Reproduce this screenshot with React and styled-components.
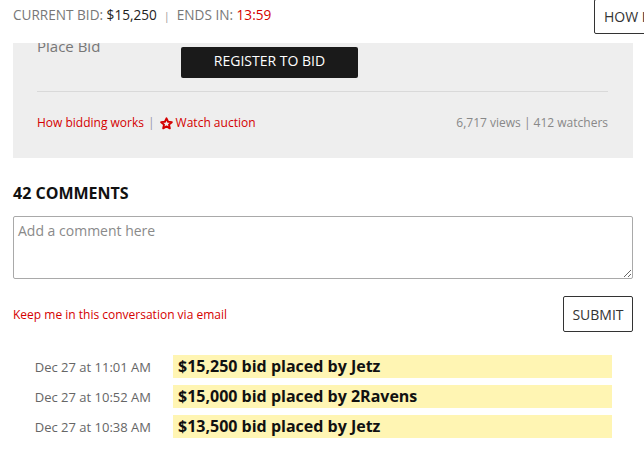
import styled, { createGlobalStyle } from 'styled-components';

const GlobalStyle = createGlobalStyle`
  html, body {
    margin: 0;
    padding: 0;
    background: #fff;
    overflow: hidden;
  }
  body {
    font-family: "Open Sans", "Noto Sans", sans-serif;
    color: #333;
  }
  * {
    box-sizing: border-box;
  }
`;

const RED = '#d40000';

const bids = [
  { time: 'Dec 27 at 11:01 AM', text: '$15,250 bid placed by Jetz' },
  { time: 'Dec 27 at 10:52 AM', text: '$15,000 bid placed by 2Ravens' },
  { time: 'Dec 27 at 10:38 AM', text: '$13,500 bid placed by Jetz' },
];

function StarIcon() {
  return (
    <svg width="13" height="13" viewBox="0 0 24 24" aria-hidden="true">
      <polygon
        points="12,2.5 14.9,8.8 21.8,9.5 16.6,14.1 18.1,20.9 12,17.4 5.9,20.9 7.4,14.1 2.2,9.5 9.1,8.8"
        fill="none"
        stroke={RED}
        strokeWidth="3.6"
        strokeLinejoin="round"
      />
    </svg>
  );
}

export default function App() {
  return (
    <>
      <GlobalStyle />
      <Header>
        <BidInfo>
          <Label>CURRENT BID: </Label>
          <Value>$15,250</Value>
          <Sep>|</Sep>
          <Label>ENDS IN: </Label>
          <Countdown>13:59</Countdown>
        </BidInfo>
        <HowButton>HOW IT WORKS</HowButton>
      </Header>
      <Page>
        <BidPanel>
          <PlaceRow>
            <PlaceLabel>Place Bid</PlaceLabel>
            <RegisterButton>REGISTER TO BID</RegisterButton>
          </PlaceRow>
          <Divider />
          <LinksRow>
            <Links>
              <RedLink>How bidding works</RedLink>
              <Pipe>|</Pipe>
              <RedLink>
                <StarIcon />
                Watch auction
              </RedLink>
            </Links>
            <Stats>6,717 views | 412 watchers</Stats>
          </LinksRow>
        </BidPanel>

        <CommentsTitle>42 COMMENTS</CommentsTitle>
        <CommentBox placeholder="Add a comment here" />
        <SubmitRow>
          <EmailLink>Keep me in this conversation via email</EmailLink>
          <SubmitButton>SUBMIT</SubmitButton>
        </SubmitRow>

        <BidList>
          {bids.map((b) => (
            <BidRow key={b.time}>
              <BidTime>{b.time}</BidTime>
              <BidText>{b.text}</BidText>
            </BidRow>
          ))}
        </BidList>
      </Page>
    </>
  );
}

const Header = styled.header`
  position: fixed;
  top: 0;
  left: 0;
  right: 0;
  z-index: 10;
  height: 43px;
  display: flex;
  align-items: flex-start;
  background: #fff;
  overflow: hidden;
`;

const BidInfo = styled.div`
  flex: 0 0 594px;
  padding: 6px 0 0 13px;
  font-size: 13.6px;
  line-height: 18px;
  white-space: pre;
`;

const Label = styled.span`
  color: #777;
`;

const Value = styled.span`
  color: #222;
`;

const Countdown = styled.span`
  color: ${RED};
`;

const Sep = styled.span`
  color: #999;
  font-size: 11px;
  margin: 0 7px;
`;

const HowButton = styled.div`
  flex: 0 0 auto;
  margin-top: -1px;
  height: 35px;
  padding: 0 9px;
  display: flex;
  align-items: center;
  border: 1px solid #333;
  border-radius: 2px;
  font-size: 14px;
  color: #333;
  white-space: nowrap;
`;

const Page = styled.main`
  padding-top: 30px;
`;

const BidPanel = styled.section`
  margin: 0 11px 0 13px;
  padding: 17px 25px 26px 24px;
  background: #eee;
`;

const PlaceRow = styled.div`
  display: flex;
  align-items: flex-start;
`;

const PlaceLabel = styled.div`
  width: 144px;
  margin-top: -11px;
  font-size: 15px;
  line-height: 20px;
  color: #777;
`;

const RegisterButton = styled.div`
  width: 177px;
  height: 31px;
  padding-bottom: 4px;
  display: flex;
  align-items: center;
  justify-content: center;
  background: #1a1a1a;
  border-radius: 2px;
  color: #fff;
  font-size: 14px;
`;

const Divider = styled.hr`
  margin: 13px 0 0;
  border: 0;
  border-top: 1px solid #d9d9d9;
`;

const LinksRow = styled.div`
  margin-top: 22px;
  display: flex;
  justify-content: space-between;
  align-items: center;
  font-size: 12px;
  line-height: 18px;
`;

const Links = styled.div`
  display: flex;
  align-items: center;
`;

const RedLink = styled.span`
  display: inline-flex;
  align-items: center;
  gap: 3px;
  color: ${RED};
`;

const Pipe = styled.span`
  color: #99a;
  margin: 0 5px 0 4px;
`;

const Stats = styled.span`
  color: #888;
`;

const CommentsTitle = styled.h2`
  margin: 24px 13px 0;
  font-size: 16px;
  line-height: 22px;
  font-weight: 700;
  color: #111;
`;

const CommentBox = styled.textarea`
  display: block;
  width: 620px;
  height: 63px;
  margin: 12px 0 0 13px;
  padding: 4px 4px;
  border: 1px solid #a9a9a9;
  border-radius: 2px;
  font-family: inherit;
  font-size: 14px;
  color: #333;
  &::placeholder {
    color: #8a8a8a;
  }
`;

const SubmitRow = styled.div`
  margin: 17px 11px 0 13px;
  display: flex;
  align-items: center;
  justify-content: space-between;
`;

const EmailLink = styled.span`
  font-size: 12px;
  color: ${RED};
`;

const SubmitButton = styled.div`
  width: 70px;
  height: 36px;
  display: flex;
  align-items: center;
  justify-content: center;
  border: 1px solid #333;
  border-radius: 2px;
  font-size: 14px;
  color: #333;
`;

const BidList = styled.ul`
  list-style: none;
  margin: 23px 32px 0 13px;
  padding: 0;
  display: grid;
  gap: 7px;
`;

const BidRow = styled.li`
  display: grid;
  grid-template-columns: 160px 1fr;
  align-items: center;
`;

const BidTime = styled.span`
  padding-right: 22px;
  text-align: right;
  font-size: 13px;
  color: #666;
`;

const BidText = styled.span`
  height: 23px;
  padding-left: 5px;
  background: #fff5b3;
  font-size: 16px;
  line-height: 23px;
  font-weight: 700;
  color: #111;
`;
